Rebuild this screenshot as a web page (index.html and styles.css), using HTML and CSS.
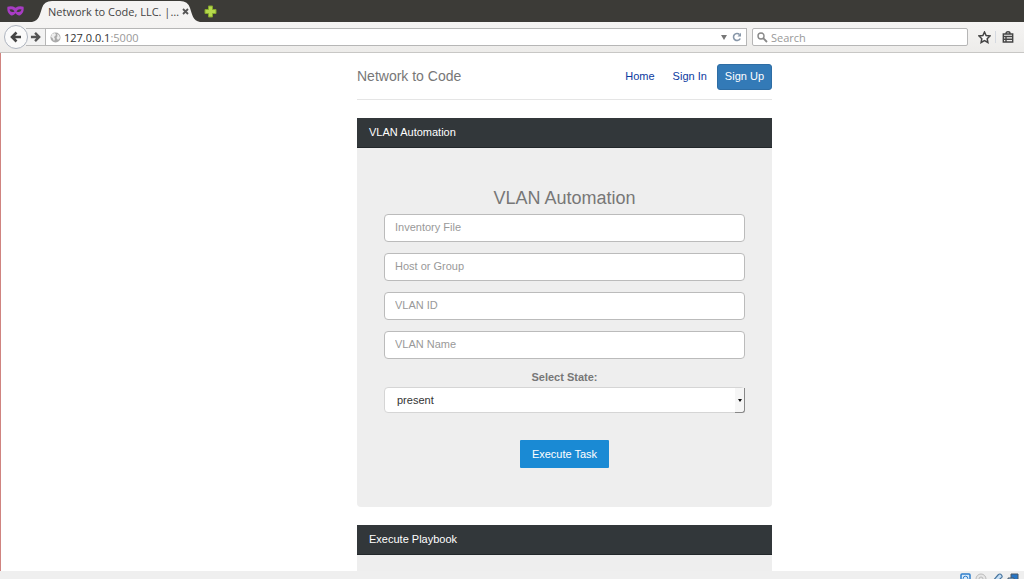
FILE: index.html
```html
<!DOCTYPE html>
<html lang="en">
<head>
<meta charset="utf-8">
<meta name="viewport" content="width=device-width, initial-scale=1">
<title>Network to Code, LLC.</title>
<link rel="stylesheet" href="styles.css">
</head>
<body>
<div class="window">
  <header class="tabs">
    <svg class="mask" viewBox="0 0 18 12" aria-hidden="true"><path fill="#a83cc4" fill-rule="evenodd" d="M.5 1.500Q5 0 9 2.500Q13 0 17.500 1.500Q18.500 8 14 10.500Q11 11.500 9 8.500Q7 11.500 4 10.500Q-.5 8 .5 1.500ZM2.500 4.500Q4 8.500 8 6.500Q6 3 2.500 4.500ZM15.500 4.500Q14 8.500 10 6.500Q12 3 15.500 4.500Z"/></svg>
    <div class="tab">
      <svg class="tab-shape" viewBox="0 0 168 22" preserveAspectRatio="none" aria-hidden="true"><path fill="#f4f3f2" d="M0 22C7 21 8 14 10 8Q12 1 20 1H148Q156 1 158 8C160 14 161 21 168 22Z"/></svg>
      <span class="tab-title">Network to Code, LLC. |…</span>
      <button class="plain tab-close" aria-label="Close tab"><svg width="7" height="7" viewBox="0 0 7 7"><path d="M1 1L6 6M6 1L1 6" stroke="#555" stroke-width="1.800"/></svg></button>
    </div>
    <button class="plain new-tab" aria-label="New tab"><svg width="13" height="13" viewBox="0 0 13 13"><path d="M4.500 1h4v3.500H12v4H8.500V12h-4V8.500H1v-4h3.500Z" fill="#b6d94c" stroke="#84a62c"/></svg></button>
  </header>
  <div class="toolbar">
    <button class="plain back" aria-label="Back"><svg width="12" height="12" viewBox="0 0 12 12"><path d="M6.500 1.500L2 6L6.500 10.500M2 6H11" fill="none" stroke="#444" stroke-width="2.600"/></svg></button>
    <button class="plain forward" aria-label="Forward"><svg width="11" height="12" viewBox="0 0 12 12"><path d="M5.500 1.500L10 6L5.500 10.500M10 6H1" fill="none" stroke="#555" stroke-width="2.600"/></svg></button>
    <div class="address">
      <svg width="11" height="11" viewBox="0 0 11 11" aria-hidden="true"><circle cx="5.500" cy="5.500" r="5" fill="#aaa"/><path fill="#eee" d="M2 2L5 1L6 3L4 5L5 7L4 9L2.500 6L1 5ZM7 2L9 3L10 6L8 8L6.500 6L7.500 4Z"/></svg>
      <span class="url">127.0.0.1<span class="port">:5000</span></span>
      <svg class="caret" width="6" height="5" viewBox="0 0 6 5" aria-hidden="true"><path fill="#777" d="M0 0H6L3 5Z"/></svg>
      <button class="plain" aria-label="Reload"><svg width="10" height="10" viewBox="0 0 10 10"><path d="M7.500 2.500A3.500 3.500 0 1 0 8.200 6.500" fill="none" stroke="#8796a8" stroke-width="1.600"/><path d="M5.500 4.500H9V.8Z" fill="#8796a8"/></svg></button>
    </div>
    <label class="search">
      <svg width="11" height="11" viewBox="0 0 11 11" aria-hidden="true"><circle cx="4" cy="4" r="3" fill="none" stroke="#888" stroke-width="1.400"/><path d="M6.200 6.200L10 10" stroke="#888" stroke-width="1.800"/></svg>
      <input type="search" placeholder="Search" aria-label="Search">
    </label>
    <div class="tools">
      <button class="plain" aria-label="Bookmark"><svg width="13" height="13" viewBox="0 0 13 13"><path d="M6.500 1L8.100 4.500L12 5L9.200 7.700L9.900 11.500L6.500 9.700L3.100 11.500L3.800 7.700L1 5L4.900 4.500Z" fill="#fafafa" stroke="#444" stroke-width="1.500"/></svg></button>
      <button class="plain list" aria-label="Bookmarks list"><svg width="12" height="12" viewBox="0 0 12 12"><path d="M4 2.500Q4 .8 6 .8Q8 .8 8 2.500M1.300 3H10.700V11H1.300ZM1 5.500H11M1 8.200H11M4 5V11" fill="none" stroke="#444" stroke-width="1.400"/></svg></button>
    </div>
  </div>

  <div class="viewport">
    <main class="page">
      <div class="masthead">
        <h1 class="brand">Network to Code</h1>
        <nav class="nav">
          <a href="#">Home</a>
          <a href="#">Sign In</a>
          <a class="signup" href="#">Sign Up</a>
        </nav>
      </div>
      <section class="panel">
        <h2 class="panel-title">VLAN Automation</h2>
        <form class="panel-body">
          <h3 class="form-title">VLAN Automation</h3>
          <input class="field" type="text" placeholder="Inventory File" aria-label="Inventory File">
          <input class="field" type="text" placeholder="Host or Group" aria-label="Host or Group">
          <input class="field" type="text" placeholder="VLAN ID" aria-label="VLAN ID">
          <input class="field" type="text" placeholder="VLAN Name" aria-label="VLAN Name">
          <label class="state-label" for="state">Select State:</label>
          <div class="select-wrap">
            <select class="state" id="state"><option>present</option><option>absent</option></select>
            <span class="select-arrow"></span>
          </div>
          <button class="execute" type="button">Execute Task</button>
        </form>
      </section>
      <section class="panel">
        <h2 class="panel-title">Execute Playbook</h2>
        <div class="panel-body"></div>
      </section>
    </main>
  </div>
  <footer class="status">
    <svg width="11" height="11" viewBox="0 0 11 11" aria-hidden="true"><rect x="1" y="1" width="9" height="9" rx="1" fill="#d8eafa" stroke="#2f7fcb" stroke-width="1.500"/><circle cx="5.500" cy="5.500" r="2.300" fill="none" stroke="#2f7fcb"/></svg>
    <svg width="12" height="12" viewBox="0 0 12 12" aria-hidden="true"><circle cx="6" cy="6" r="5" fill="#e6e6e6" stroke="#bbb"/><circle cx="6" cy="6" r="2" fill="none" stroke="#bbb"/></svg>
    <svg width="12" height="12" viewBox="0 0 12 12" aria-hidden="true"><path d="M1 9L7 2Q9 0 10.500 2Q12 4 10 5L4 11" fill="#c7dff5" stroke="#46749e" stroke-width="1.200"/></svg>
    <svg width="12" height="12" viewBox="0 0 12 12" aria-hidden="true"><path d="M4 1H11V7H4Z" fill="#2775c4" stroke="#4b5866"/><path d="M1 5H7V11H1Z" fill="#8abcea" stroke="#4b5866"/></svg>
  </footer>
</div>
</body>
</html>
```
FILE: styles.css
```css
* { box-sizing: border-box; }

body {
  margin: 0;
  font-family: "Liberation Sans", Arial, sans-serif;
  font-size: 11px;
  color: #777;
}

h1, h2, h3 { margin: 0; font-weight: normal; }

.window {
  display: flex;
  flex-direction: column;
  height: 100vh;
  overflow: hidden;
  background: #fff;
}

.plain {
  display: flex;
  align-items: center;
  justify-content: center;
  padding: 0;
  border: 0;
  background: none;
}

/* Browser chrome */
.tabs {
  display: flex;
  flex: none;
  align-items: center;
  height: 22px;
  padding-left: 7px;
  background: #3c3b37;
  font-family: "Open Sans", sans-serif;
}

.mask { width: 17px; height: 12px; margin-right: 8px; }

.tab {
  position: relative;
  display: flex;
  align-items: center;
  width: 168px;
  height: 22px;
  padding: 1px 11px 0 16px;
  color: #444;
}

.tab-shape {
  position: absolute;
  inset: 0;
  width: 100%;
  height: 100%;
}

.tab-title { position: relative; flex: 1; white-space: nowrap; }
.tab-close { position: relative; }
.new-tab { margin-left: 4px; }

.toolbar {
  display: flex;
  flex: none;
  align-items: center;
  height: 31px;
  padding: 0 8px 0 4px;
  border-bottom: 1px solid #c8c7c5;
  background: linear-gradient(#f5f4f3, #edecea);
  font-family: "Open Sans", sans-serif;
}

.back {
  z-index: 1;
  width: 24px;
  height: 24px;
  border: 1px solid #aeb4bf;
  border-radius: 50%;
  background: #fafafa;
}

.forward {
  width: 19px;
  height: 18px;
  margin-left: -2px;
  border: solid #b9b9b9;
  border-width: 1px 0;
  background: #f3f3f3;
}

.address, .search {
  display: flex;
  align-items: center;
  height: 18px;
  padding: 0 4px;
  border: 1px solid #b6b6b6;
  background: #fff;
}

.address { flex: 1; }
.url { flex: 1; margin-left: 3px; color: #333; }
.port { color: #999; }
.caret { margin-right: 5px; }

.search { width: 216px; margin-left: 5px; border-radius: 2px; }

.search input {
  flex: 1;
  min-width: 0;
  margin-left: 3px;
  padding: 0;
  border: 0;
  outline: 0;
  background: none;
  font: inherit;
}

.search input::placeholder { color: #999; opacity: 1; }

.tools { display: flex; align-items: center; margin-left: 10px; }
.list { margin-left: 4px; padding: 0 2px 0 6px; border-left: 1px solid #d5d9e0; }

/* Page */
.viewport {
  flex: 1;
  min-height: 0;
  overflow: hidden;
  border-left: 1px solid #d08480;
}

.page {
  width: 415px;
  max-width: 100%;
  margin-left: 34.8%;
}

.masthead {
  display: flex;
  align-items: center;
  justify-content: space-between;
  margin-bottom: 18px;
  padding: 11px 0 9px;
  border-bottom: 1px solid #e5e5e5;
}

.brand { padding-bottom: 2px; font-size: 14px; }

.nav { display: flex; align-items: center; line-height: 16px; }
.nav a { padding: 4px 9px 6px; color: #0b3aa0; text-decoration: none; }

.nav .signup {
  margin-left: 1px;
  padding: 3px 7px 5px;
  border: 1px solid #2e6da4;
  border-radius: 3px;
  background: #337ab7;
  color: #fff;
}

.panel { margin-bottom: 18px; }

.panel-title {
  padding: 7px 12px;
  border-bottom: 1px solid #22272a;
  background: #32373a;
  color: #fff;
  font-size: 11px;
  line-height: 15px;
}

.panel-body {
  display: flex;
  flex-direction: column;
  align-items: center;
  min-height: 60px;
  padding: 39px 27px;
  border-radius: 0 0 4px 4px;
  background: #eee;
}

.form-title { margin-bottom: 5px; font-size: 18px; line-height: 22px; }

.field, .state {
  width: 100%;
  border-radius: 4px;
  background: #fff;
  font: inherit;
}

.field {
  height: 28px;
  margin-bottom: 11px;
  padding: 0 10px 2px;
  border: 1px solid #bbb;
}

.field::placeholder { color: #999; opacity: 1; }

.state-label { font-weight: bold; line-height: 14px; }

.select-wrap {
  position: relative;
  width: 100%;
  margin: 3px 0 27px;
}

.state {
  display: block;
  height: 26px;
  padding: 0 12px;
  border: 1px solid #d5d5d5;
  color: #333;
  appearance: none;
}

.select-arrow {
  position: absolute;
  top: 1px;
  right: 0;
  bottom: 0;
  width: 10px;
  border: solid #888;
  border-width: 0 1px 1px 0;
  border-radius: 0 0 3px 0;
  background: #f6f6f6;
  pointer-events: none;
}

.select-arrow::after {
  content: "";
  position: absolute;
  top: 11px;
  left: 3px;
  border: 2px solid transparent;
  border-top: 3px solid #111;
  border-bottom: 0;
}

.execute {
  height: 28px;
  padding: 0 12px;
  border: 0;
  border-radius: 1px;
  background: #1a8ad4;
  color: #fff;
  font: inherit;
}

.status {
  display: flex;
  flex: none;
  align-items: flex-start;
  justify-content: flex-end;
  gap: 4px;
  height: 8px;
  padding: 2px 5px 0;
  overflow: hidden;
  background: #efefef;
}
```
